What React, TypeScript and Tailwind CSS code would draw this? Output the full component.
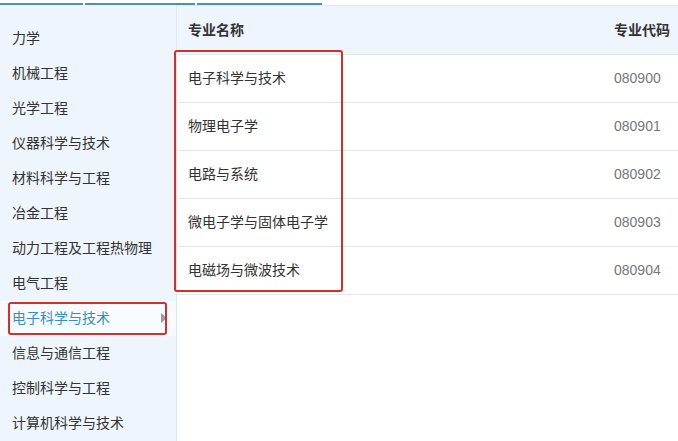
const majors = [
  "力学",
  "机械工程",
  "光学工程",
  "仪器科学与技术",
  "材料科学与工程",
  "冶金工程",
  "动力工程及工程热物理",
  "电气工程",
  "电子科学与技术",
  "信息与通信工程",
  "控制科学与工程",
  "计算机科学与技术",
];

const rows = [
  { name: "电子科学与技术", code: "080900" },
  { name: "物理电子学", code: "080901" },
  { name: "电路与系统", code: "080902" },
  { name: "微电子学与固体电子学", code: "080903" },
  { name: "电磁场与微波技术", code: "080904" },
];

const App = () => {
  const active = "电子科学与技术";

  return (
    <div
      className="relative w-[678px] h-[441px] overflow-hidden bg-white text-[14px] text-[#333]"
      style={{ fontFamily: '"Liberation Sans", "Noto Sans CJK SC", sans-serif' }}
    >
      {/* tab underline strip */}
      <div className="flex h-[5px] gap-[2px] pt-[3px]">
        <div className="w-[83px] h-[2px] bg-[#4793bb]" />
        <div className="w-[110px] h-[2px] bg-[#4793bb]" />
        <div className="w-[125px] h-[2px] bg-[#4793bb]" />
      </div>

      <div className="flex h-[436px]">
        {/* sidebar */}
        <div className="w-[177px] shrink-0 bg-[#eef5fc] border-r border-[#dfe7ef] pt-4">
          {majors.map((m) => {
            const on = m === active;
            return (
              <div
                key={m}
                className={
                  on
                    ? "relative h-[35px] flex items-center pl-3 bg-[#f7fbff] text-[#3b8cc0]"
                    : "h-[35px] flex items-center pl-3"
                }
              >
                {m}
                {on && (
                  <span className="absolute right-[9px] top-[12px] w-0 h-0 border-y-[5px] border-y-transparent border-l-[6px] border-l-[#9a9a9a]" />
                )}
              </div>
            );
          })}
        </div>

        {/* table */}
        <div className="flex-1">
          <div className="h-[50px] flex items-center bg-[#eef5fc] border-y border-[#e2e8ef] font-bold">
            <div className="flex-1 pl-[11px]">专业名称</div>
            <div className="w-[64px]">专业代码</div>
          </div>
          {rows.map((r) => (
            <div key={r.code} className="h-[48px] flex items-center border-b border-[#e6e6e6]">
              <div className="flex-1 pl-[11px]">{r.name}</div>
              <div className="w-[64px] text-[#777]">{r.code}</div>
            </div>
          ))}
        </div>
      </div>

      {/* red annotation boxes */}
      <div className="absolute left-[8px] top-[302px] w-[159px] h-[33px] border-2 border-[#d2302c] rounded-[3px]" />
      <div className="absolute left-[174px] top-[50px] w-[169px] h-[242px] border-2 border-[#d2302c] rounded-[3px]" />
    </div>
  );
};

export default App;
